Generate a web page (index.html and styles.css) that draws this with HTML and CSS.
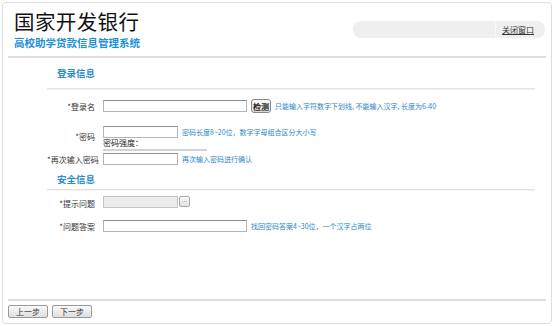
FILE: index.html
```html
<!DOCTYPE html>
<html lang="zh-CN">
<head>
    <meta charset="UTF-8">
    <title>高校助学贷款信息管理系统</title>
    <link rel="stylesheet" href="styles.css">
</head>
<body>
    <div class="frame">
        <div class="header">
            <div class="brand">
                <h1 class="title">国家开发银行</h1>
                <h2 class="subtitle">高校助学贷款信息管理系统</h2>
            </div>
            <div class="toolbar">
                <a class="close-link" href="#">关闭窗口</a>
            </div>
        </div>

        <div class="form">
            <div class="section">
                <div class="section-title">登录信息</div>
                <div class="row row-login">
                    <label class="label">*登录名</label>
                    <input type="text" class="input input-long">
                    <button class="check-btn">检测</button>
                    <span class="hint">只能输入字符数字下划线, 不能输入汉字, 长度为6-40</span>
                </div>
                <div class="row row-pwd">
                    <label class="label">*密码</label>
                    <div class="pwd-field">
                        <div class="pwd-line">
                            <input type="password" class="input input-short">
                            <span class="hint">密码长度8~20位，数字字母组合区分大小写</span>
                        </div>
                        <div class="strength">密码强度：</div>
                        <div class="strength-bar"></div>
                    </div>
                </div>
                <div class="row row-repeat">
                    <label class="label">*再次输入密码</label>
                    <input type="password" class="input input-short">
                    <span class="hint">再次输入密码进行确认</span>
                </div>
            </div>

            <div class="section">
                <div class="section-title section-title-2">安全信息</div>
                <div class="row row-question">
                    <label class="label">*提示问题</label>
                    <input type="text" class="input input-short input-disabled" disabled>
                    <button class="pick-btn">···</button>
                </div>
                <div class="row row-answer">
                    <label class="label">*问题答案</label>
                    <input type="text" class="input input-long">
                    <span class="hint">找回密码答案4~30位，一个汉字占两位</span>
                </div>
            </div>
        </div>

        <div class="footer">
            <button class="step-btn">上一步</button>
            <button class="step-btn">下一步</button>
        </div>
    </div>
</body>
</html>
```

FILE: styles.css
```css
body {
    margin: 0;
    background-color: #ffffff;
    font-family: "Noto Sans CJK SC", "Noto Sans", sans-serif;
    color: #333333;
}
.frame {
    margin: 2px;
    height: 322px;
    box-sizing: border-box;
    border: 1px solid #dddddd;
    border-radius: 4px;
    display: flex;
    flex-direction: column;
}
.header {
    display: flex;
    justify-content: space-between;
    align-items: flex-start;
    height: 53px;
    margin: 0 5px;
    border-bottom: 2px solid #dddddd;
}
.brand {
    padding-left: 6px;
    padding-top: 7px;
}
.title {
    margin: 0;
    font-size: 20.5px;
    line-height: 22px;
    font-weight: normal;
    color: #111111;
    letter-spacing: 0.4px;
}
.subtitle {
    margin: 0;
    margin-top: 3px;
    font-size: 10.5px;
    line-height: 15px;
    font-weight: bold;
    color: #1e90d8;
}
.toolbar {
    margin-top: 18px;
    margin-right: 1px;
    width: 192px;
    height: 17px;
    background-color: #efefef;
    border-radius: 8px;
    display: flex;
    justify-content: flex-end;
    align-items: center;
}
.close-link {
    font-size: 8px;
    color: #333333;
    text-decoration: underline;
    padding-right: 11px;
    padding-left: 6px;
    border-left: 1px solid #f7f7f7;
    line-height: 17px;
}
.form {
    flex: 1;
}
.section {
    margin-left: 44px;
    margin-right: 16px;
}
.section-title {
    height: 30px;
    line-height: 30px;
    padding-left: 10px;
    font-size: 9.5px;
    font-weight: bold;
    color: #2a8bcb;
    border-bottom: 1px solid #e3e3e3;
    box-shadow: 0 1px 0 #f3f3f3;
}
.section-title-2 {
    height: 20px;
    line-height: 20px;
}
.row {
    display: flex;
    align-items: center;
    font-size: 8px;
}
.label {
    width: 48px;
    text-align: right;
    margin-right: 8px;
    color: #333333;
    white-space: nowrap;
}
.row-login {
    height: 34px;
}
.row-pwd {
    height: 26px;
}
.row-repeat {
    height: 20px;
}
.row-question {
    height: 26px;
}
.row-answer {
    height: 20px;
}
.input {
    box-sizing: border-box;
    height: 12px;
    margin: 0;
    padding: 0 2px;
    border: 1px solid #b5b5b5;
    border-top-color: #8f8f8f;
    background-color: #ffffff;
    font-size: 8px;
}
.input-long {
    width: 144px;
}
.input-short {
    width: 75px;
}
.input-disabled {
    background-color: #ececec;
    border-color: #c4c4c4;
}
.hint {
    color: #2f86c5;
    margin-left: 4px;
    font-size: 7px;
    white-space: nowrap;
}
.check-btn {
    margin-left: 4px;
    height: 14px;
    width: 20px;
    padding: 0;
    font-family: inherit;
    font-size: 8px;
    font-weight: bold;
    color: #222222;
    border: 1px solid #8a8a8a;
    border-radius: 3px;
    background: linear-gradient(#fbfbfb, #dcdcdc);
}
.pick-btn {
    margin-left: 1px;
    height: 11px;
    width: 11px;
    padding: 0;
    font-size: 6px;
    line-height: 9px;
    color: #333333;
    border: 1px solid #a8a8a8;
    border-radius: 2px;
    background: linear-gradient(#fafafa, #e2e2e2);
}
.row-pwd .label {
    align-self: center;
}
.pwd-field {
    align-self: flex-start;
    padding-top: 3px;
}
.pwd-line {
    display: flex;
    align-items: center;
}
.strength {
    font-size: 8px;
    line-height: 9px;
    color: #222222;
}
.strength-bar {
    width: 104px;
    height: 2px;
    margin-top: 2px;
    background-color: #d2d2d2;
}
.row-question .input {
    margin-top: -3px;
}
.row-question .pick-btn {
    margin-top: -3px;
}
.footer {
    margin: 0 5px;
    border-top: 2px solid #dddddd;
    padding-top: 4px;
    padding-bottom: 5px;
    display: flex;
    gap: 4px;
}
.step-btn {
    width: 40px;
    height: 13px;
    padding: 0;
    font-family: inherit;
    font-size: 8px;
    line-height: 11px;
    color: #333333;
    border: 1px solid #9a9a9a;
    border-radius: 2px;
    background: linear-gradient(#fafafa, #dedede);
}
```
